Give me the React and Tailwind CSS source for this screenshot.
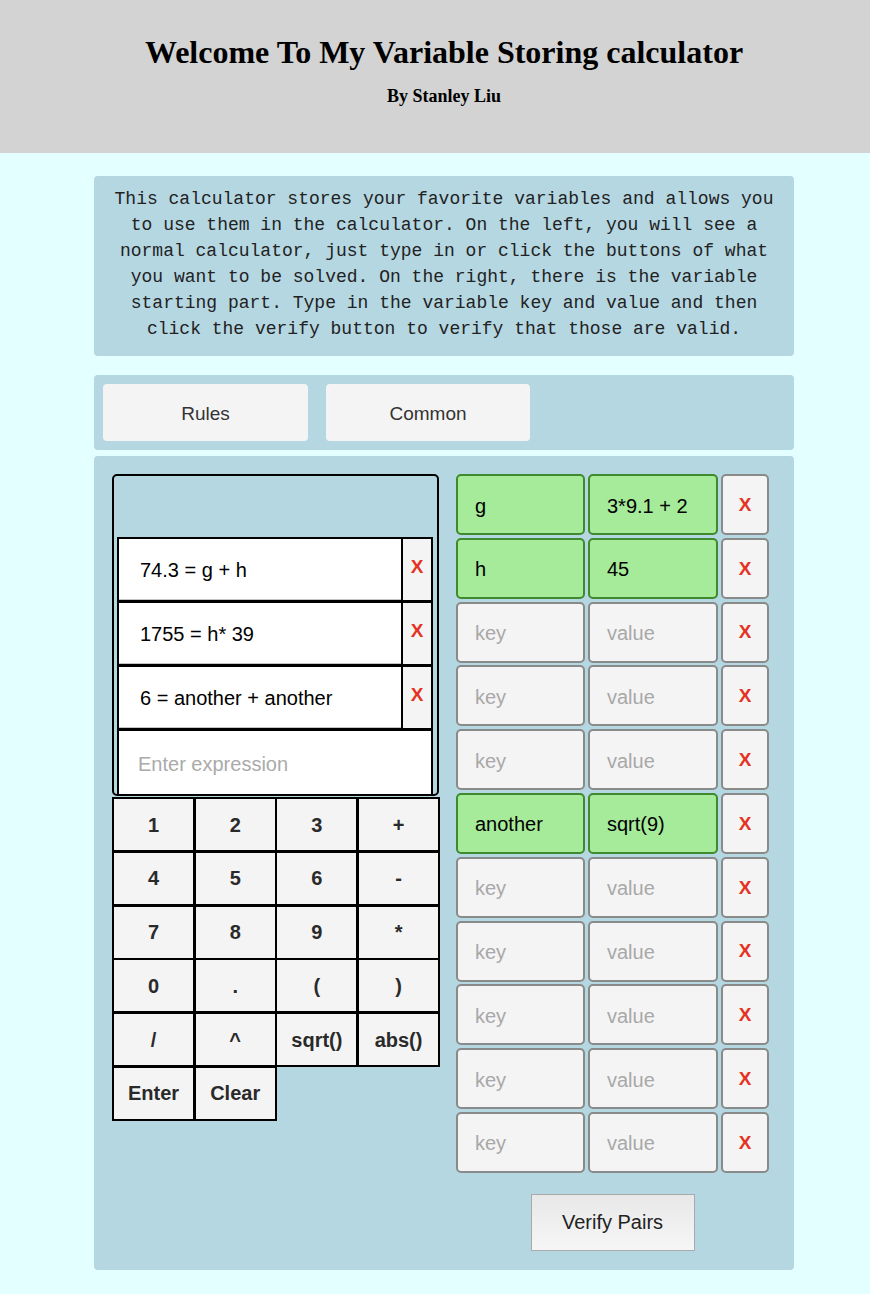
import React from 'react';

// Variable storing calculator page: header, intro text, tabs, calculator + variable pairs

const expressions = ['74.3 = g + h', '1755 = h* 39', '6 = another + another'];

const keys = ['1', '2', '3', '+', '4', '5', '6', '-', '7', '8', '9', '*', '0', '.', '(', ')', '/', '^', 'sqrt()', 'abs()', 'Enter', 'Clear'];

const pairs = [
  { key: 'g', value: '3*9.1 + 2' },
  { key: 'h', value: '45' },
  { key: '', value: '' },
  { key: '', value: '' },
  { key: '', value: '' },
  { key: 'another', value: 'sqrt(9)' },
  { key: '', value: '' },
  { key: '', value: '' },
  { key: '', value: '' },
  { key: '', value: '' },
  { key: '', value: '' },
];

const sans = "font-['Liberation_Sans',Arial,sans-serif]";

const ExpressionRow = ({ text, first }) => (
  <div className={`flex h-[65px] border-2 border-black ${first ? '' : '-mt-px'}`}>
    <div className="flex-1 flex items-center bg-white border-b border-[#c4c4c4] pl-[21px] pt-[1px] text-[20px] text-black">
      {text}
    </div>
    <div className="w-[30px] bg-[#f4f4f4] border-l-2 border-black flex justify-center pt-[14px] text-[19px] font-bold text-[#e53222]">
      X
    </div>
  </div>
);

const Calculator = () => (
  <div className="w-[327px] shrink-0">
    {/* display + history */}
    <div className="border-2 border-black rounded-[5px] pt-[61px] pl-[3px] pr-[4px]">
      {expressions.map((e, i) => (
        <ExpressionRow key={e} text={e} first={i === 0} />
      ))}
      <div className="-mt-px h-[65px] border-2 border-b-0 border-black bg-white flex items-center pl-[19px] pt-[2px] text-[20px] text-[#aaaaaa]">
        Enter expression
      </div>
    </div>
    {/* keypad */}
    <div className="grid grid-cols-[repeat(4,81.7px)] grid-rows-[repeat(6,53.8px)] mt-px">
      {keys.map((k) => (
        <button
          key={k}
          className="w-[83px] h-[55px] border-2 border-black bg-[#f4f4f4] text-[20px] font-bold text-[#2a2a2a] flex items-center justify-center"
        >
          {k}
        </button>
      ))}
    </div>
  </div>
);

const PairRow = ({ pair }) => {
  const filled = pair.key !== '';
  const field = filled
    ? 'bg-[#a6eb9a] border-[#3e8a2c] text-black'
    : 'bg-[#f4f4f4] border-[#8a8a8a] text-[#a8a8a8]';
  return (
    <div className="flex gap-[3px] h-[61px]">
      <div className={`w-[129px] rounded-[5px] border-2 flex items-center pl-[17px] pt-[2px] text-[20px] ${field}`}>
        {filled ? pair.key : 'key'}
      </div>
      <div className={`w-[130px] rounded-[5px] border-2 flex items-center pl-[17px] pt-[2px] text-[20px] ${field}`}>
        {filled ? pair.value : 'value'}
      </div>
      <div className="w-[48px] rounded-[5px] border-2 border-[#8a8a8a] bg-[#f4f4f4] flex items-center justify-center pt-[1px] text-[19px] font-bold text-[#e53222]">
        X
      </div>
    </div>
  );
};

export default function App() {
  return (
    <div className={`min-h-[1294px] bg-[#e3ffff] ${sans}`}>
      <header className="h-[153px] bg-[#d3d3d3] flex flex-col items-center pt-[34px] pl-[18px] font-['Liberation_Serif','Times_New_Roman',serif] text-black">
        <h1 className="text-[32px] leading-[36px] font-bold">Welcome To My Variable Storing calculator</h1>
        <p className="mt-[16px] text-[18px] leading-[20px] font-bold">By Stanley Liu</p>
      </header>

      <div className="w-[700px] ml-[94px] pt-[23px]">
        <div className="bg-[#b5d7e2] rounded-[4px] pt-[10px] pb-[14px] px-[14px] text-center font-['Liberation_Mono','Courier_New',monospace] text-[18px] leading-[26px] text-[#222]">
          This calculator stores your favorite variables and allows you to use them in the calculator. On the left, you will see a normal calculator, just type in or click the buttons of what you want to be solved. On the right, there is the variable starting part. Type in the variable key and value and then click the verify button to verify that those are valid.
        </div>

        <div className="mt-[19px] bg-[#b5d7e2] rounded-[4px] p-[9px] flex gap-[18px]">
          <button className="w-[205px] h-[57px] rounded-[4px] bg-[#f4f4f4] pt-[3px] text-[19px] text-[#333]">Rules</button>
          <button className="w-[204px] h-[57px] rounded-[4px] bg-[#f4f4f4] pt-[3px] text-[19px] text-[#333]">Common</button>
        </div>

        <div className="mt-[6px] bg-[#b5d7e2] rounded-[4px] pt-[18px] pl-[18px] pr-[25px] pb-[19px] flex gap-[17px]">
          <Calculator />
          <div className="w-[313px] flex flex-col items-center">
            <div className="flex flex-col gap-[2.8px] w-full">
              {pairs.map((p, i) => (
                <PairRow key={i} pair={p} />
              ))}
            </div>
            <button className="mt-[21px] w-[164px] h-[57px] border border-[#aaaaaa] bg-gradient-to-b from-[#e8e8e8] to-[#f6f6f6] text-[20px] text-[#222]">
              Verify Pairs
            </button>
          </div>
        </div>
      </div>
    </div>
  );
}
